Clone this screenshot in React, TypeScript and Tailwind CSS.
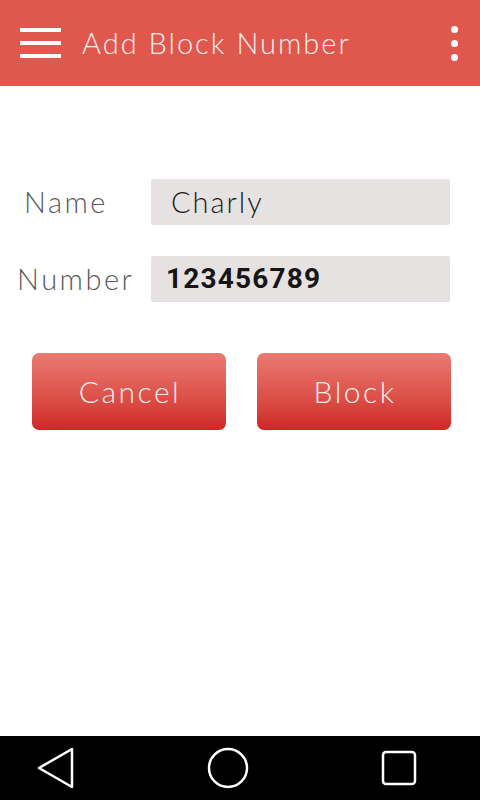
import React from "react";

const font = { fontFamily: "Lato, 'Open Sans', sans-serif" };

export default function App() {
    return (
        <div className="flex h-[800px] w-[480px] flex-col bg-white" style={font}>
            {/* header */}
            <header className="flex h-[86px] items-center bg-[#e0574e] pl-5 pr-[22px]">
                <div className="flex w-[41px] flex-col gap-[9px]">
                    <span className="h-[4px] w-full bg-white" />
                    <span className="h-[4px] w-full bg-white" />
                    <span className="h-[4px] w-full bg-white" />
                </div>
                <h1 className="ml-[21px] flex-1 text-[29px] font-light tracking-[2px] text-[#fdf1ef]">Add Block Number</h1>
                <div className="flex flex-col gap-[7px]">
                    <span className="h-[7px] w-[7px] rounded-full bg-white" />
                    <span className="h-[7px] w-[7px] rounded-full bg-white" />
                    <span className="h-[7px] w-[7px] rounded-full bg-white" />
                </div>
            </header>

            {/* form */}
            <main className="flex-1 pt-[93px]">
                <div className="flex items-center">
                    <label className="w-[151px] pl-[24px] text-[29px] font-light tracking-[2.5px] text-[#5a5a5a]">Name</label>
                    <div className="flex h-[46px] w-[299px] items-center rounded-[2px] bg-[#e6e2e2] pl-[20px] text-[29px] font-light tracking-[2px] text-[#1c1c1c]">
                        Charly
                    </div>
                </div>
                <div className="mt-[31px] flex items-center">
                    <label className="w-[151px] pl-[17px] text-[29px] font-light tracking-[2.5px] text-[#5a5a5a]">Number</label>
                    <div
                        className="flex h-[46px] w-[299px] items-center rounded-[2px] bg-[#e6e2e2] pl-[15px] text-[28px] font-bold tracking-[1.2px] text-[#151515]"
                        style={{ fontFamily: "Roboto, sans-serif" }}
                    >
                        123456789
                    </div>
                </div>

                <div className="mt-[51px] flex gap-[31px] pl-[32px]">
                    <button className="h-[77px] w-[194px] rounded-[7px] bg-linear-to-b from-[#ea7a72] to-[#cf2626] pl-[2px] text-[30px] font-light tracking-[2.5px] text-[#fdf0ee]">
                        Cancel
                    </button>
                    <button className="h-[77px] w-[194px] rounded-[7px] bg-linear-to-b from-[#ea7a72] to-[#cf2626] pl-[2px] text-[30px] font-light tracking-[2.5px] text-[#fdf0ee]">
                        Block
                    </button>
                </div>
            </main>

            {/* nav bar */}
            <nav className="flex h-[64px] items-center bg-black">
                <svg className="ml-[36px]" width="40" height="44" viewBox="0 0 40 44" fill="none" stroke="white" strokeWidth="2.5" strokeLinejoin="round">
                    <path d="M36 3 L3 22 L36 41 Z" />
                </svg>
                <svg className="ml-[131px]" width="42" height="42" viewBox="0 0 42 42" fill="none" stroke="white" strokeWidth="2.5">
                    <circle cx="21" cy="21" r="19" />
                </svg>
                <svg className="ml-[132px]" width="36" height="36" viewBox="0 0 36 36" fill="none" stroke="white" strokeWidth="2.5">
                    <rect x="2" y="2" width="32" height="32" rx="3" />
                </svg>
            </nav>
        </div>
    );
}
